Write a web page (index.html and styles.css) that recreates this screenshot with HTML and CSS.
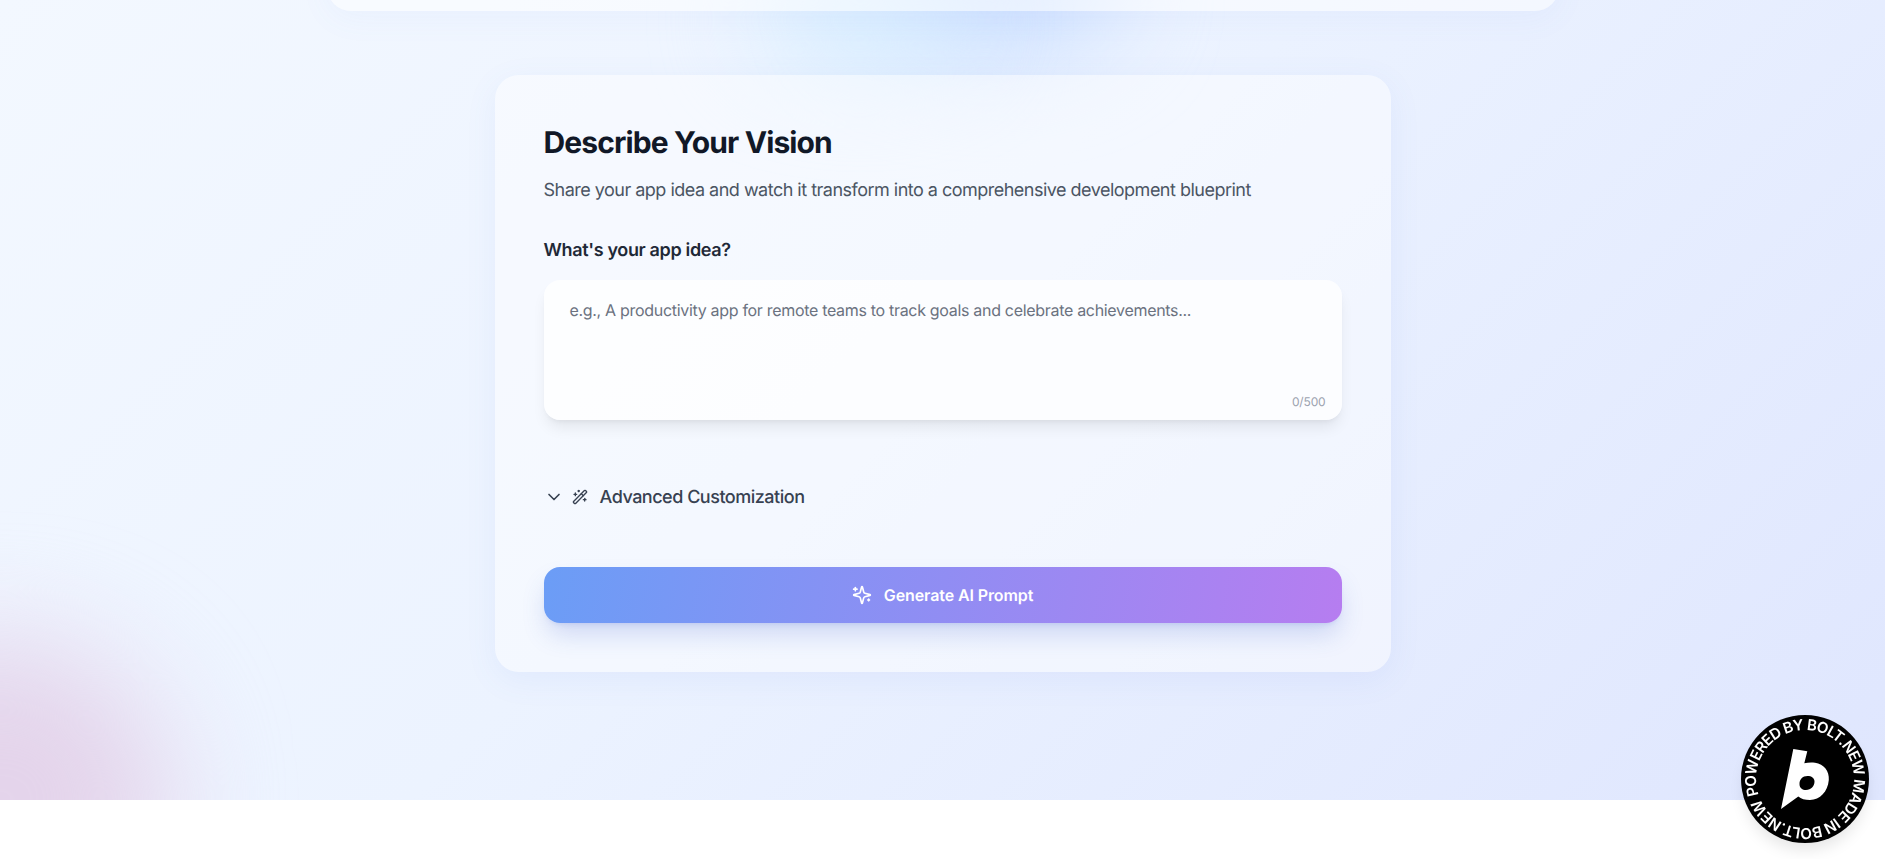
FILE: index.html
```html
<!DOCTYPE html>
<html lang="en">
<head>
<meta charset="utf-8">
<title>Describe Your Vision</title>
<link rel="stylesheet" href="styles.css">
</head>
<body>
<main class="page">
  <div class="blob blob-blue"></div>
  <div class="blob blob-cyan"></div>
  <div class="blob blob-pink"></div>
  <div class="top-card"></div>
  <section class="card">
    <h2 class="title">Describe Your Vision</h2>
    <p class="subtitle">Share your app idea and watch it transform into a comprehensive development blueprint</p>
    <label class="label" for="idea">What's your app idea?</label>
    <div class="field">
      <textarea id="idea" class="input" placeholder="e.g., A productivity app for remote teams to track goals and celebrate achievements..."></textarea>
      <span class="counter">0/500</span>
    </div>
    <button class="toggle" type="button">
      <svg class="icon-20" viewBox="0 0 24 24"><path d="m6 9 6 6 6-6"/></svg>
      <svg class="icon-16" viewBox="0 0 24 24"><path d="m21.64 3.64-1.28-1.28a1.21 1.21 0 0 0-1.72 0L2.36 18.64a1.21 1.21 0 0 0 0 1.72l1.28 1.28a1.2 1.2 0 0 0 1.72 0L21.64 5.36a1.2 1.2 0 0 0 0-1.72"/><path d="m14 7 3 3"/><path d="M5 6v4"/><path d="M19 14v4"/><path d="M10 2v2"/><path d="M7 8H3"/><path d="M21 16h-4"/><path d="M11 3H9"/></svg>
      <span class="toggle-text">Advanced Customization</span>
    </button>
    <button class="generate" type="button">
      <svg class="icon-20" viewBox="0 0 24 24"><g transform="matrix(-1 0 0 1 24 0)"><path d="M9.937 15.5A2 2 0 0 0 8.5 14.063l-6.135-1.582a.5.5 0 0 1 0-.962L8.5 9.936A2 2 0 0 0 9.937 8.5l1.582-6.135a.5.5 0 0 1 .963 0L14.063 8.5A2 2 0 0 0 15.5 9.937l6.135 1.581a.5.5 0 0 1 0 .964L15.5 14.063a2 2 0 0 0-1.437 1.437l-1.582 6.135a.5.5 0 0 1-.963 0z"/><path d="M20 3v4"/><path d="M22 5h-4"/><path d="M4 17v2"/><path d="M5 18H3"/></g></svg>
      <span>Generate AI Prompt</span>
    </button>
  </section>
</main>
<a class="badge" href="#" aria-label="Made in Bolt.new">
  <svg viewBox="0 0 128 128" width="128" height="128">
    <circle cx="64" cy="64" r="64" fill="#000"/>
    <defs><path id="ring" d="M15 64a49 49 0 1 1 98 0a49 49 0 1 1-98 0"/></defs>
    <g transform="rotate(-19 64 64)">
      <text class="badge-text"><textPath href="#ring" textLength="304" lengthAdjust="spacing">POWERED BY BOLT.NEW MADE IN BOLT.NEW</textPath></text>
    </g>
    <path fill="#fff" fill-rule="evenodd" d="M52.3 34 L66.3 36.3 L63.3 48.3 C66.5 47.5 70 47.2 74 47.7 C83 49 88.5 56 87.8 65 C86.8 76.5 79 85 69 85 C64 85 60 84 57.3 81.5 L40 94 Z M66.5 61 C61.5 61 58.5 64.5 58.5 69 C58.5 73 61.5 75 65 75 C70 75 73.5 71 73.5 66.5 C73.5 63 70.5 61 66.5 61 Z"/>
  </svg>
</a>
</body>
</html>
```
FILE: styles.css
```css
* { box-sizing: border-box; }
html, body { margin: 0; padding: 0; }
body {
  height: 859px;
  overflow: hidden;
  background: #fff;
  font-family: Inter, "Liberation Sans", sans-serif;
  text-rendering: geometricPrecision;
}
.page {
  position: relative;
  height: 800px;
  overflow: hidden;
  display: flex;
  flex-direction: column;
  align-items: center;
  background: linear-gradient(135deg, #f3f8ff 0%, #ecf3ff 45%, #dfe6fe 100%);
}
.blob { position: absolute; border-radius: 50%; filter: blur(48px); }
.blob-blue { left: 850px; top: -80px; width: 270px; height: 140px; background: #cbdfff; }
.blob-cyan { left: 750px; top: -30px; width: 220px; height: 100px; background: #d8eeff; }
.blob-pink { left: -170px; top: 640px; width: 340px; height: 320px; background: #e4d4eb; filter: blur(56px); }
.top-card {
  position: relative;
  flex: none;
  width: 1232px;
  height: 111px;
  margin-top: -100px;
  border-radius: 24px;
  background: rgba(255, 255, 255, 0.5);
  box-shadow: 0 8px 32px rgba(90, 130, 230, 0.05);
}
.card {
  position: relative;
  flex: none;
  width: 896px;
  margin-top: 64px;
  padding: 49px;
  border-radius: 24px;
  background: rgba(255, 255, 255, 0.45);
  box-shadow: 0 8px 32px rgba(90, 130, 230, 0.08);
}
.title {
  margin: 1px 0 16px;
  font-size: 30px;
  line-height: 36px;
  font-weight: 700;
  letter-spacing: -0.88px;
  color: #111827;
}
.subtitle {
  margin: 0 0 32px;
  font-size: 18px;
  line-height: 28px;
  letter-spacing: -0.51px;
  color: #4b5563;
}
.label {
  display: block;
  margin-bottom: 15px;
  font-size: 18px;
  line-height: 28px;
  font-weight: 600;
  letter-spacing: -0.34px;
  color: #1f2937;
}
.field { position: relative; height: 140px; margin-bottom: 63px; }
.input {
  display: block;
  width: 100%;
  height: 100%;
  padding: 16px 24px;
  border: 2px solid transparent;
  border-radius: 16px;
  outline: none;
  resize: none;
  background: rgba(255, 255, 255, 0.75);
  box-shadow: 0 10px 15px -3px rgba(0, 0, 0, 0.08), 0 4px 6px -4px rgba(0, 0, 0, 0.08);
  font: 400 16px/24px Inter, "Liberation Sans", sans-serif;
  letter-spacing: -0.31px;
  color: #1f2937;
  text-rendering: geometricPrecision;
}
.input::placeholder { color: #6b7280; opacity: 1; }
.counter {
  position: absolute;
  right: 16px;
  bottom: 10px;
  font-size: 12px;
  line-height: 16px;
  letter-spacing: -0.15px;
  color: #9ca3af;
}
.toggle {
  display: flex;
  align-items: center;
  height: 28px;
  margin-bottom: 56px;
  padding: 0;
  border: 0;
  background: none;
  font: 500 18px/28px Inter, "Liberation Sans", sans-serif;
  letter-spacing: -0.49px;
  color: #374151;
  text-rendering: geometricPrecision;
}
.icon-20, .icon-16 {
  flex: none;
  fill: none;
  stroke: currentColor;
  stroke-width: 2;
  stroke-linecap: round;
  stroke-linejoin: round;
}
.icon-20 { width: 20px; height: 20px; }
.icon-16 { width: 16px; height: 16px; margin-left: 8px; }
.toggle-text { margin: 1px 0 0 12px; }
.generate {
  display: flex;
  align-items: center;
  justify-content: center;
  gap: 12px;
  width: 100%;
  height: 56px;
  padding: 0;
  border: 0;
  border-radius: 16px;
  background: linear-gradient(100deg, #6b9df6 0%, #b67df0 100%);
  box-shadow: 0 14px 26px -4px rgba(60, 90, 200, 0.22), 0 4px 6px -4px rgba(60, 90, 200, 0.2);
  font: 600 16px/24px Inter, "Liberation Sans", sans-serif;
  letter-spacing: -0.1px;
  color: #fff;
  text-rendering: geometricPrecision;
}
.badge {
  position: fixed;
  left: 1741px;
  top: 715px;
  width: 128px;
  height: 128px;
  border-radius: 50%;
  box-shadow: 0 10px 15px -3px rgba(0, 0, 0, 0.1);
}
.badge svg { display: block; }
.badge-text {
  font: 600 15px Inter, "Liberation Sans", sans-serif;
  fill: #fff;
}
```
